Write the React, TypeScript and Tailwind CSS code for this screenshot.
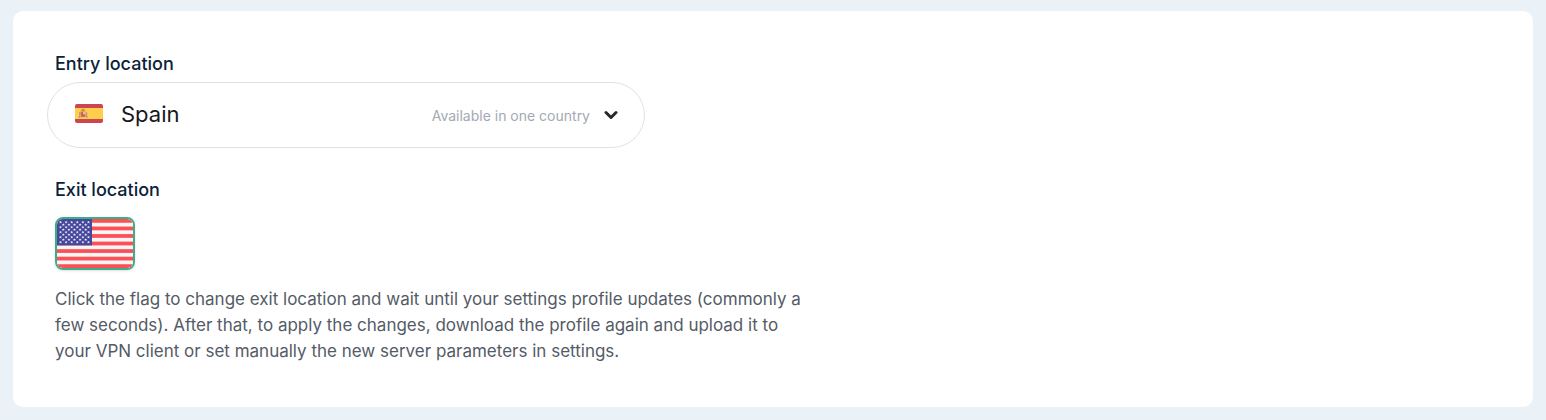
import React from "react";

const stars: { x: number; y: number }[] = [];
for (let row = 0; row < 9; row++) {
  const count = row % 2 === 0 ? 6 : 5;
  for (let col = 0; col < count; col++) {
    stars.push({ x: 3.5 + col * 5.6 + (row % 2) * 2.8, y: 3.2 + row * 2.5 });
  }
}

function SpainFlag({ className }: { className?: string }) {
  return (
    <svg viewBox="0 0 28 19" className={className} aria-hidden="true">
      <clipPath id="spain">
        <rect width="28" height="19" rx="2" />
      </clipPath>
      <g clipPath="url(#spain)">
        <rect width="28" height="19" fill="#cb4650" />
        <rect y="4" width="28" height="11" fill="#ffce4a" />
        <rect x="4" y="8" width="1.2" height="5" fill="#c99a78" />
        <rect x="11" y="8" width="1.2" height="5" fill="#c99a78" />
        <path d="M5.6 7.6h5v3.6c0 1.2-1 2-2.5 2s-2.5-.8-2.5-2z" fill="#d0654a" />
        <path d="M8.1 7.6h2.5v2.6H8.1z" fill="#d9c3c5" />
        <path d="M6 7c0-1.600 1-2.200 2.100-2.200S10.200 5.400 10.200 7z" fill="#d9913d" />
        <rect x="3.5" y="12.5" width="2.2" height="1" fill="#9b87a8" />
        <rect x="10.5" y="12.5" width="2.2" height="1" fill="#9b87a8" />
      </g>
    </svg>
  );
}

function UsaFlag({ className }: { className?: string }) {
  return (
    <svg viewBox="0 0 76 49" preserveAspectRatio="none" className={className} aria-hidden="true">
      <rect width="76" height="49" fill="#f5f5f5" />
      {[0, 1, 2, 3, 4, 5, 6].map((i) => (
        <rect key={i} y={(i * 98) / 13} width="76" height={49 / 13} fill="#fb5058" />
      ))}
      <rect width="35" height="26.4" fill="#45479d" />
      {stars.map((s, i) => (
        <path
          key={i}
          transform={`translate(${s.x} ${s.y}) scale(1.1)`}
          d="M0-1.400.4-.45 1.400-.4.600.2.900 1.200 0 .6-.9 1.200-.6.200-1.400-.4-.4-.45z"
          fill="#f5f5f5"
        />
      ))}
    </svg>
  );
}

export default function App() {
  return (
    <div className="min-h-screen bg-[#eaf1f7] px-[13px] pt-[11px] pb-[13px] font-['Inter',sans-serif]">
      <main className="rounded-[10px] bg-white px-[34px] pt-[41px] pb-[43px]">
        <label htmlFor="entry" className="block px-2 text-lg leading-6 font-medium text-[#0b2239]">
          Entry location
        </label>
        <div className="mt-1.5 grid h-[66px] w-full max-w-[598px] items-center">
          <select
            id="entry"
            defaultValue="es"
            className="col-start-1 row-start-1 h-full w-full appearance-none rounded-full border border-[#dfe2e5] bg-white pr-56 pb-0.5 pl-[73px] text-[22px] text-[#17191c]"
          >
            <option value="es">Spain</option>
          </select>
          <div className="pointer-events-none col-start-1 row-start-1 flex items-center pr-[27px] pl-7">
            <SpainFlag className="mb-1 h-[19px] w-7" />
            <span className="mt-0.5 ml-auto text-sm text-[#a3a9b3]">
              Available in one country
            </span>
            <svg viewBox="0 0 14 10" className="ml-[14px] h-[10px] w-[14px]" aria-hidden="true">
              <path
                d="M2 2.500 7 7.500l5-5"
                fill="none"
                stroke="#25282d"
                strokeWidth="3"
                strokeLinecap="round"
                strokeLinejoin="round"
              />
            </svg>
          </div>
        </div>
        <section className="px-2 pt-[30px]">
          <h2 className="text-lg leading-6 font-medium text-[#0b2239]">Exit location</h2>
          <button
            type="button"
            aria-label="United States"
            className="mt-[15px] block h-[53px] w-20 overflow-hidden rounded-lg border-2 border-[#3aaf85] shadow-sm"
          >
            <UsaFlag className="h-full w-full" />
          </button>
          <p className="mt-4 max-w-[762px] text-[17px] leading-[26px] text-[#545b66]">
            Click the flag to change exit location and wait until your settings profile updates
            (commonly a few seconds). After that, to apply the changes, download the profile again
            and upload it to your VPN client or set manually the new server parameters in settings.
          </p>
        </section>
      </main>
    </div>
  );
}
